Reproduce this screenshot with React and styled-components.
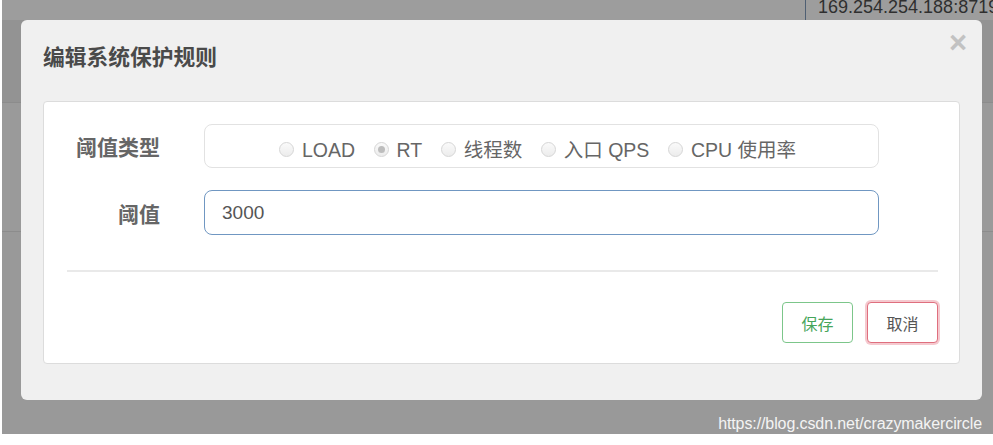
import React from 'react';
import styled, { createGlobalStyle, css } from 'styled-components';

const GlobalStyle = createGlobalStyle`
  html, body { margin: 0; padding: 0; background: #fff; }
  body { font-family: "Liberation Sans", "Noto Sans CJK SC", Arial, sans-serif; }
  * { box-sizing: border-box; }
`;

const thresholdTypes = [
  { label: 'LOAD' },
  { label: 'RT', checked: true },
  { label: '线程数' },
  { label: '入口 QPS' },
  { label: 'CPU 使用率' },
];

const Page = styled.div`
  position: relative;
  width: 993px;
  height: 445px;
  overflow: hidden;
  background: #fff;
`;

const Backdrop = styled.div`
  display: flex;
  flex-direction: column;
  height: 434px;
  margin-left: 2px;
  background: #999;
`;

const TopBand = styled.div`
  display: flex;
  justify-content: flex-end;
  height: 20px;
  background: #9d9d9d;
`;

const IpCell = styled.div`
  width: 188px;
  height: 30px;
  padding-left: 12px;
  border-left: 1px solid #4f5f73;
  border-bottom: 1px solid #4f6a8a;
  font-size: 18px;
  line-height: 14px;
  color: #2f2f2f;
  white-space: nowrap;
  overflow: hidden;
`;

const Band = styled.div`
  height: ${p => p.h}px;
  background: ${p => p.bg};
  border-bottom: ${p => (p.line ? '1px solid #8c8c8c' : 'none')};
`;

const Rest = styled.div`
  flex: 1;
  display: flex;
  align-items: flex-end;
  justify-content: flex-end;
  padding: 0 11px 1px 0;
`;

const Watermark = styled.span`
  font-size: 16px;
  color: #f4f4f4;
  letter-spacing: -0.1px;
`;

const Modal = styled.div`
  position: absolute;
  top: 20px;
  left: 21px;
  width: 961px;
  height: 380px;
  background: #f0f0f0;
  border-radius: 6px;
  display: flex;
  flex-direction: column;
  padding: 0 22px 36px;
`;

const Header = styled.div`
  display: flex;
  justify-content: space-between;
  align-items: flex-start;
  height: 81px;
  padding-top: 24px;
`;

const Title = styled.h4`
  margin: 0;
  font-family: "Noto Sans CJK SC", sans-serif;
  font-size: 21.75px;
  line-height: 24px;
  font-weight: 700;
  color: #4a4a4a;
`;

const Close = styled.span`
  margin-top: -16px;
  margin-right: -7px;
  font-family: "Liberation Sans", sans-serif;
  font-size: 31px;
  font-weight: 700;
  line-height: 30px;
  color: #c2c2c2;
`;

const Panel = styled.div`
  flex: 1;
  background: #fff;
  border: 1px solid #dcdcdc;
  border-radius: 4px;
  padding: 22px 21px 20px 22px;
  display: flex;
  flex-direction: column;
`;

const FormRow = styled.div`
  display: flex;
  align-items: center;
  margin-right: 59px;
  & + & { margin-top: 22px; }
`;

const Label = styled.label`
  width: 94px;
  margin-right: 44px;
  text-align: right;
  font-family: "Noto Sans CJK SC", sans-serif;
  font-size: 21px;
  font-weight: 700;
  color: #666;
`;

const fieldBox = css`
  flex: 1;
  border-radius: 8px;
  background: #fff;
`;

const RadioGroup = styled.div`
  ${fieldBox};
  height: 44px;
  border: 1px solid #e2e2e2;
  display: flex;
  align-items: center;
  justify-content: center;
  gap: 18.5px;
  padding: 7px 8px 0 0;
`;

const RadioItem = styled.span`
  display: flex;
  align-items: center;
  gap: 8px;
  font-size: 19.5px;
  line-height: 20px;
  color: #666;
`;

const RadioDot = styled.span`
  width: 15px;
  height: 15px;
  border-radius: 50%;
  border: 1px solid #d6d6d6;
  background: linear-gradient(#fafafa, #ececec);
  display: flex;
  align-items: center;
  justify-content: center;
  &::after {
    content: '';
    width: 7px;
    height: 7px;
    border-radius: 50%;
    background: ${p => (p.checked ? '#bdbdbd' : 'transparent')};
  }
`;

const Input = styled.input`
  ${fieldBox};
  height: 45px;
  border: 1px solid #7097c2;
  padding: 0 17px;
  font-family: "Liberation Sans", sans-serif;
  font-size: 19px;
  color: #555;
  outline: none;
`;

const Divider = styled.hr`
  margin: 35px 0 0 1px;
  border: 0;
  border-top: 2px solid #e9e9e9;
`;

const Footer = styled.div`
  margin-top: auto;
  display: flex;
  justify-content: flex-end;
  gap: 14px;
`;

const Button = styled.button`
  width: 71px;
  height: 41px;
  border-radius: 4px;
  background: #fff;
  font-family: "Noto Sans CJK SC", sans-serif;
  font-size: 16px;
  cursor: pointer;
  ${p =>
    p.variant === 'save'
      ? css`
          border: 1px solid #7cc68a;
          color: #46a55a;
        `
      : css`
          border: 1px solid #df6f7e;
          color: #555;
          box-shadow: 0 0 0 2px rgba(230, 120, 135, 0.4);
        `}
`;

export default function App() {
  return (
    <Page>
      <GlobalStyle />
      <Backdrop>
        <TopBand>
          <IpCell>169.254.254.188:8719</IpCell>
        </TopBand>
        <Band h={83} bg="#939393" line />
        <Band h={129} bg="#9a9a9a" line />
        <Rest>
          <Watermark>https://blog.csdn.net/crazymakercircle</Watermark>
        </Rest>
      </Backdrop>

      <Modal>
        <Header>
          <Title>编辑系统保护规则</Title>
          <Close>×</Close>
        </Header>
        <Panel>
          <FormRow>
            <Label>阈值类型</Label>
            <RadioGroup>
              {thresholdTypes.map(t => (
                <RadioItem key={t.label}>
                  <RadioDot checked={t.checked} />
                  {t.label}
                </RadioItem>
              ))}
            </RadioGroup>
          </FormRow>
          <FormRow>
            <Label>阈值</Label>
            <Input defaultValue="3000" />
          </FormRow>
          <Divider />
          <Footer>
            <Button variant="save">保存</Button>
            <Button variant="cancel">取消</Button>
          </Footer>
        </Panel>
      </Modal>
    </Page>
  );
}
